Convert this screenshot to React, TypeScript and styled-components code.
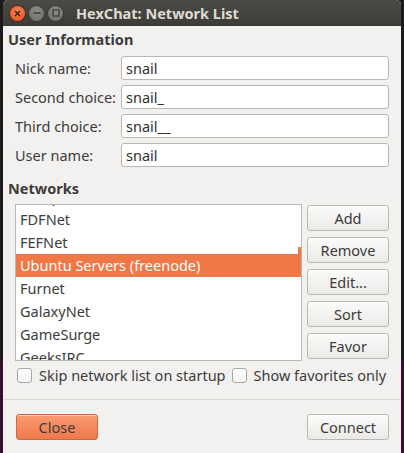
import React from 'react'
import styled, { createGlobalStyle } from 'styled-components'

const GlobalStyle = createGlobalStyle`
  html, body {
    margin: 0;
    padding: 0;
  }
  body {
    background: linear-gradient(#1b1b1b 0, #1b1b1b 355px, #3a0f2c 365px, #3a0f2c 100%);
    font-family: 'Noto Sans', 'DejaVu Sans', sans-serif;
    font-size: 14.5px;
    color: #3c3c3c;
  }
`

const Screen = styled.div`
  width: 404px;
  height: 453px;
  padding: 0 3px;
  box-sizing: border-box;
  overflow: hidden;
`

const Window = styled.div`
  height: 100%;
  display: flex;
  flex-direction: column;
  background: #f2f1f0;
  border-radius: 5px 5px 0 0;
  overflow: hidden;
`

const TitleBar = styled.div`
  height: 26px;
  flex: none;
  display: flex;
  align-items: center;
  padding-left: 7px;
  background: linear-gradient(#4b4a45, #3d3c38);
`

const Controls = styled.div`
  display: flex;
  gap: 4px;
  margin-right: 13px;
`

const Knob = styled.div<{ $close?: boolean }>`
  width: 15px;
  height: 15px;
  border-radius: 50%;
  display: flex;
  align-items: center;
  justify-content: center;
  background: ${({ $close }) =>
    $close
      ? 'radial-gradient(circle at 50% 35%, #f7825a, #e3501d)'
      : 'radial-gradient(circle at 50% 35%, #8d8c86, #6b6a65)'};
  box-shadow: 0 0 0 1px ${({ $close }) => ($close ? '#5a2a18' : '#3a3935')};
`

const Title = styled.div`
  color: #dfdbd2;
  font-weight: bold;
  font-size: 14.5px;
`

const Body = styled.div`
  flex: 1;
  display: flex;
  flex-direction: column;
  padding: 3px 12px 0 5px;
`

const Heading = styled.div<{ $top?: number }>`
  font-weight: bold;
  line-height: 20px;
  margin-top: ${({ $top }) => $top || 0}px;
`

const Form = styled.div`
  display: grid;
  grid-template-columns: 106px 1fr;
  row-gap: 5px;
  margin: 7px 0 0 7px;
`

const Label = styled.div`
  height: 24px;
  line-height: 24px;
  white-space: nowrap;
`

const Entry = styled.div`
  height: 24px;
  box-sizing: border-box;
  border: 1px solid #b9b7b2;
  border-radius: 3px;
  background: #fff;
  padding-left: 4px;
  line-height: 22px;
  color: #2f2f2f;
`

const NetArea = styled.div`
  display: flex;
  gap: 5px;
  margin: 6px 0 0 7px;
`

const List = styled.div`
  position: relative;
  width: 287px;
  height: 157px;
  box-sizing: border-box;
  border: 1px solid #b9b7b2;
  background: #fff;
  overflow: hidden;
`

const ListInner = styled.div`
  margin-top: -20px;
`

const Item = styled.div<{ $selected?: boolean }>`
  height: 23px;
  line-height: 23px;
  padding-left: 4px;
  white-space: nowrap;
  background: ${({ $selected }) => ($selected ? '#f07746' : 'transparent')};
  color: ${({ $selected }) => ($selected ? '#ffffff' : '#3c3c3c')};
`

const ScrollMark = styled.div`
  position: absolute;
  right: 0;
  top: 42px;
  width: 3px;
  height: 8px;
  background: #f07746;
`

const Buttons = styled.div`
  display: flex;
  flex-direction: column;
  gap: 6px;
  width: 82px;
  padding-top: 1px;
`

const Button = styled.div<{ $accent?: boolean }>`
  height: 26px;
  box-sizing: border-box;
  border-radius: 3px;
  display: flex;
  align-items: center;
  justify-content: center;
  border: 1px solid ${({ $accent }) => ($accent ? '#c96a43' : '#bab8b2')};
  background: ${({ $accent }) =>
    $accent ? 'linear-gradient(#f99a72, #f0794a)' : 'linear-gradient(#fbfbfa, #ebeae8)'};
  color: #3c3c3c;
  box-shadow: inset 0 1px 0 rgba(255, 255, 255, 0.5);
`

const Checks = styled.div`
  display: flex;
  align-items: center;
  margin: 5px 0 0 9px;
  height: 18px;
`

const Check = styled.span`
  flex: none;
  width: 15px;
  height: 15px;
  box-sizing: border-box;
  border: 1px solid #a9a7a1;
  border-radius: 3px;
  background: linear-gradient(#ffffff, #f2f2f2);
  margin-right: 7px;
`

const CheckLabel = styled.span`
  flex: none;
  margin-right: 6px;
  white-space: nowrap;
`

const Separator = styled.div`
  height: 1px;
  background: #dcdad5;
  margin: 15px -12px 0 -5px;
`

const Footer = styled.div`
  display: flex;
  justify-content: space-between;
  margin: 14px 0 0 8px;
  height: 26px;

  & > div {
    width: 82px;
    height: 26px;
  }
`

const networks = [
  'EuropNet',
  'FDFNet',
  'FEFNet',
  'Ubuntu Servers (freenode)',
  'Furnet',
  'GalaxyNet',
  'GameSurge',
  'GeeksIRC',
]

export default function App() {
  return (
    <Screen>
      <GlobalStyle />
      <Window>
        <TitleBar>
          <Controls>
            <Knob $close>
              <svg width="7" height="7" viewBox="0 0 7 7">
                <path d="M1 1 L6 6 M6 1 L1 6" stroke="#4a1a08" strokeWidth="1.4" />
              </svg>
            </Knob>
            <Knob>
              <svg width="8" height="8" viewBox="0 0 8 8">
                <path d="M0.5 4 H7.5" stroke="#3a3935" strokeWidth="1.4" />
              </svg>
            </Knob>
            <Knob>
              <svg width="8" height="8" viewBox="0 0 8 8">
                <rect x="1" y="1" width="6" height="6" fill="none" stroke="#3a3935" strokeWidth="1.2" />
              </svg>
            </Knob>
          </Controls>
          <Title>HexChat: Network List</Title>
        </TitleBar>
        <Body>
          <Heading>User Information</Heading>
          <Form>
            <Label>Nick name:</Label>
            <Entry>snail</Entry>
            <Label>Second choice:</Label>
            <Entry>snail_</Entry>
            <Label>Third choice:</Label>
            <Entry>snail__</Entry>
            <Label>User name:</Label>
            <Entry>snail</Entry>
          </Form>
          <Heading $top={11}>Networks</Heading>
          <NetArea>
            <List>
              <ListInner>
                {networks.map((n) => (
                  <Item key={n} $selected={n.startsWith('Ubuntu')}>
                    {n}
                  </Item>
                ))}
              </ListInner>
              <ScrollMark />
            </List>
            <Buttons>
              <Button>Add</Button>
              <Button>Remove</Button>
              <Button>Edit...</Button>
              <Button>Sort</Button>
              <Button>Favor</Button>
            </Buttons>
          </NetArea>
          <Checks>
            <Check />
            <CheckLabel>Skip network list on startup</CheckLabel>
            <Check />
            <CheckLabel>Show favorites only</CheckLabel>
          </Checks>
          <Separator />
          <Footer>
            <Button $accent>Close</Button>
            <Button>Connect</Button>
          </Footer>
        </Body>
      </Window>
    </Screen>
  )
}
